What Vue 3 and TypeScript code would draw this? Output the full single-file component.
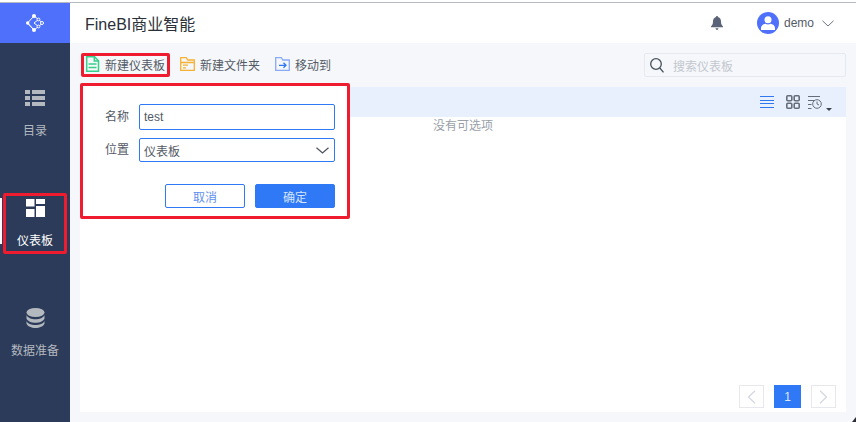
<script setup lang="ts">
const navItems = [
  { key: 'list', label: '目录' },
  { key: 'dash', label: '仪表板' },
  { key: 'db', label: '数据准备' },
]
</script>

<template>
  <div class="shot">
    <aside class="side">
      <div class="logo">
        <svg width="18" height="18" viewBox="0 0 18 18" fill="none" stroke="#fff" stroke-width="1">
          <path d="M8 2 1.500 9 8 16 12.500 12.500 16.500 9 12.500 5.500 8 2M8 9 12.500 5.500M8 9 12.500 12.500M1.500 9 8 16" />
          <g fill="#fff" stroke="none">
            <circle cx="8" cy="2" r="2" />
            <circle cx="1.700" cy="9" r="1.700" />
            <circle cx="8" cy="16" r="2" />
          </g>
          <g fill="#4f70fb" stroke="#fff" stroke-width="1">
            <circle cx="16" cy="9" r="1.500" />
            <circle cx="12.500" cy="5.500" r="1.400" />
            <circle cx="12.500" cy="12.500" r="1.400" />
          </g>
        </svg>
      </div>
      <nav class="nav">
        <div v-for="item in navItems" :key="item.key" class="nav-item" :class="{ active: item.key === 'dash' }">
          <span class="nav-icon">
            <svg v-if="item.key === 'list'" width="20" height="16" viewBox="0 0 20 16" fill="#b4b8bf">
              <rect x="0" y="0" width="5" height="4" /><rect x="7" y="0" width="13" height="4" />
              <rect x="0" y="6" width="5" height="4" /><rect x="7" y="6" width="13" height="4" />
              <rect x="0" y="12" width="5" height="4" /><rect x="7" y="12" width="13" height="4" />
            </svg>
            <svg v-else-if="item.key === 'dash'" width="19" height="18" viewBox="0 0 19 18" fill="#fff">
              <rect x="0" y="0" width="8.500" height="7.500" /><rect x="0" y="10" width="8.500" height="8" />
              <rect x="10" y="0" width="9" height="5" /><rect x="10" y="7" width="9" height="11" />
            </svg>
            <svg v-else width="19" height="20" viewBox="0 0 19 20" fill="#b4b8bf">
              <ellipse cx="9.500" cy="4.500" rx="9" ry="4.500" />
              <path d="M.5 7c1 2.800 5 4.300 9 4.300S17.500 9.800 18.500 7v3.500c-1 2.800-5 4.300-9 4.300s-8-1.500-9-4.300z" />
              <path d="M.5 13c1 2.800 5 4 9 4s8-1.200 9-4v2.500c-1 2.800-5 4.500-9 4.500s-8-1.700-9-4.500z" />
            </svg>
          </span>
          <span class="nav-label">{{ item.label }}</span>
        </div>
      </nav>
    </aside>

    <main class="main">
      <header class="head">
        <h1 class="title">FineBI商业智能</h1>
        <svg class="bell" width="12" height="14" viewBox="0 0 12 14" fill="#5a6478">
          <path d="M6 0c.7 0 1 .5 1 1 2.200.5 3 2.500 3 4.500 0 2.500.8 3.500 2 5v.8H0v-.8c1.200-1.500 2-2.500 2-5C2 3.500 2.800 1.500 5 1c0-.5.300-1 1-1z" />
          <path d="M4.500 12.300h3C7.300 13.500 6.700 14 6 14s-1.300-.5-1.500-1.700z" />
        </svg>
        <span class="avatar">
          <svg width="14" height="14" viewBox="0 0 14 14" fill="#fff">
            <circle cx="7" cy="3.700" r="3.500" />
            <path d="M0 14v-2c0-2.500 2.500-4 4.500-4.300 1.500 1 3.500 1 5 0C11.500 8 14 9.500 14 12v2z" />
          </svg>
        </span>
        <span class="user">demo</span>
        <svg class="user-caret" width="12" height="7" viewBox="0 0 12 7" fill="none" stroke="#6c7480" stroke-width="1">
          <path d="M.5.800 6 6l5.500-5.200" />
        </svg>
      </header>

      <section class="content">
        <div class="toolbar">
          <div class="tool outlined">
            <svg width="15" height="16" viewBox="0 0 15 16" fill="none" stroke="#35d08a" stroke-width="1.500">
              <path d="M1.700.8h7.800l4 4v10.400H1.700z" />
              <path d="M9.300.8v4.200h4.200M3.500 8h8M3.500 11.500h8" />
            </svg>
            <span>新建仪表板</span>
          </div>
          <div class="tool">
            <svg width="15" height="14" viewBox="0 0 15 14" fill="none" stroke="#f8b133" stroke-width="1.300">
              <path d="M.7 13.300V.7h5.600l1.500 2.300h6.500v10.300z" />
              <path d="M.7 5.500h13.600M3 8.200h5M3 10.800h3" />
            </svg>
            <span>新建文件夹</span>
          </div>
          <div class="tool">
            <svg width="15" height="14" viewBox="0 0 15 14" fill="none" stroke="#8aa9f7" stroke-width="1.300">
              <path d="M.7 13.300V.7h5.600l1.500 2.300h6.500v10.300z" />
              <path d="M4 8.300h7M8.500 5.800 11 8.300l-2.500 2.500" stroke="#2f78f0" />
            </svg>
            <span>移动到</span>
          </div>
          <div class="search">
            <svg width="14" height="15" viewBox="0 0 14 15" fill="none" stroke="#46505e" stroke-width="1.300">
              <circle cx="6" cy="6" r="5.300" /><path d="m9.800 10 3.700 4.300" />
            </svg>
            <span>搜索仪表板</span>
          </div>
        </div>

        <div class="panel">
          <div class="panel-bar">
            <svg width="14" height="12" viewBox="0 0 14 12" fill="none" stroke="#2f78f0" stroke-width="1">
              <path d="M0 .5h14M0 4.500h14M0 7.500h14M0 11.500h14" />
            </svg>
            <svg class="grid-icon" width="14" height="14" viewBox="0 0 14 14" fill="none" stroke="#666d7a" stroke-width="1.600">
              <rect x=".8" y=".8" width="5" height="5" rx="1" /><rect x="8.200" y=".8" width="5" height="5" rx="1" />
              <rect x=".8" y="8.200" width="5" height="5" rx="1" /><rect x="8.200" y="8.200" width="5" height="5" rx="1" />
            </svg>
            <svg class="recent-icon" width="24" height="17" viewBox="0 0 24 17" fill="none" stroke="#666d7a" stroke-width="1">
              <path d="M0 1.500h12M0 5.500h6M0 9.500h3.500M0 13.500h3.500" />
              <circle cx="9" cy="9" r="4.300" /><path d="M9 6.500V9l2 1" />
              <path d="M18 13h6l-3 3z" fill="#3c4350" stroke="none" />
            </svg>
          </div>
          <p class="empty">没有可选项</p>
          <div class="pager">
            <button class="page-arrow" type="button" aria-label="上一页">
              <svg width="9" height="14" viewBox="0 0 9 14" fill="none" stroke="#d5d8e2" stroke-width="1.300"><path d="M8 .7 1.500 7 8 13.300" /></svg>
            </button>
            <span class="page-num">1</span>
            <button class="page-arrow" type="button" aria-label="下一页">
              <svg width="9" height="14" viewBox="0 0 9 14" fill="none" stroke="#d5d8e2" stroke-width="1.300"><path d="M1 .7 7.500 7 1 13.300" /></svg>
            </button>
          </div>
        </div>

        <form class="popover" @submit.prevent>
          <div class="field">
            <label>名称</label>
            <div class="input tall">test</div>
          </div>
          <div class="field">
            <label>位置</label>
            <div class="input select">
              <span>仪表板</span>
              <svg width="13" height="7" viewBox="0 0 13 7" fill="none" stroke="#4b5360" stroke-width="1.200"><path d="M.5.700 6.500 6l6-5.300" /></svg>
            </div>
          </div>
          <div class="actions">
            <button class="btn ghost" type="button">取消</button>
            <button class="btn primary" type="button">确定</button>
          </div>
        </form>
      </section>
    </main>
    <span class="corner"></span>
  </div>
</template>

<style>
html, body { margin: 0; padding: 0; background: #f5f7fa; }
</style>

<style scoped>
.shot {
  position: relative;
  width: 856px;
  height: 422px;
  box-sizing: border-box;
  padding-top: 2px;
  background: #fff;
  display: flex;
  overflow: hidden;
  font-family: "Liberation Sans", "Noto Sans CJK SC", sans-serif;
  font-size: 12px;
  color: #535a66;
}
.shot::before {
  content: "";
  position: absolute;
  left: 0; right: 0; top: 2px;
  height: 1px;
  background: #b7b9c0;
}
.corner {
  position: absolute;
  right: 0; bottom: 0;
  width: 4px; height: 5px;
  background: #2a2d33;
  clip-path: polygon(100% 0, 100% 100%, 0 100%);
}
.side { width: 70px; flex: none; background: #2b3b59; display: flex; flex-direction: column; padding-top: 1px; }
.logo { height: 40px; background: #4f70fb; display: flex; align-items: center; justify-content: center; }
.nav { display: flex; flex-direction: column; padding-top: 46px; gap: 50px; }
.nav-item { position: relative; height: 60px; display: flex; flex-direction: column; align-items: center; color: #b4b8bf; gap: 16px; }
.nav-icon { height: 18px; display: flex; align-items: center; }
.nav-item.active { color: #fff; }
.nav-label { line-height: 16px; }
.nav-item.active::before {
  content: "";
  position: absolute;
  left: 0; top: -1px;
  width: 2px; height: 46px;
  background: #fff;
}
.nav-item.active::after {
  content: "";
  position: absolute;
  left: 3px; top: -6px;
  width: 64px; height: 61px;
  box-sizing: border-box;
  border: 3px solid #ee1c2e;
  border-radius: 2px;
}
.main { flex: 1; min-width: 0; display: flex; flex-direction: column; padding-top: 1px; background: #f5f7fa; }
.head { height: 40px; flex: none; background: #fff; display: flex; align-items: center; padding: 0 22px 0 15px; }
.title { margin: 0; font-size: 16px; font-weight: 400; color: #2b3038; flex: 1; }
.bell { margin-right: 34px; }
.avatar { width: 22px; height: 22px; border-radius: 50%; background: #4f70fb; display: flex; align-items: center; justify-content: center; }
.user { margin: 0 8px 0 5px; font-size: 12px; color: #545b66; }
.content { position: relative; flex: 1; display: flex; flex-direction: column; padding: 0 10px 10px; min-height: 0; }
.toolbar { height: 44px; box-sizing: border-box; padding-bottom: 2px; display: flex; align-items: center; flex: none; }
.tool { position: relative; height: 18px; display: flex; align-items: center; gap: 5px; margin-right: 10px; padding-left: 5px; }
.tool.outlined::after {
  content: "";
  position: absolute;
  left: 1px; top: -2px; right: -5px; bottom: -4px;
  border: 3px solid #ee1c2e;
  border-radius: 2px;
}
.search {
  margin-left: auto;
  margin-top: 2px;
  width: 202px; height: 24px;
  box-sizing: border-box;
  border: 1px solid #e6e9ef;
  border-radius: 2px;
  display: flex; align-items: center;
  padding-left: 5px; gap: 9px;
  color: #c3c7cf;
}
.panel { position: relative; flex: 1; background: #fff; display: flex; flex-direction: column; min-height: 0; }
.panel-bar { height: 30px; flex: none; background: #e8f0fd; display: flex; align-items: center; justify-content: flex-end; padding-right: 14px; }
.grid-icon { margin-left: 12px; }
.recent-icon { margin-left: 8px; margin-top: 3px; }
.empty { margin: 1px 0 0; text-align: center; color: #9a9fa8; line-height: 16px; }
.pager { margin-top: auto; display: flex; justify-content: flex-end; align-items: center; padding: 0 10px 4px 0; }
.page-arrow {
  width: 25px; height: 23px; box-sizing: border-box; padding: 0;
  border: 1px solid #e6e8ee; background: #fff;
  display: flex; align-items: center; justify-content: center;
}
.page-num { width: 27px; height: 23px; margin: 0 10px; background: #2f78f6; color: #dfe9fd; display: flex; align-items: center; justify-content: center; }
.popover {
  position: absolute;
  left: 10px; top: 40px;
  width: 270px; height: 136px;
  box-sizing: border-box;
  background: #fff;
  border: 3px solid #ee1c2e;
  border-radius: 2px;
  padding: 18px 12px 0 0;
  display: flex; flex-direction: column;
}
.field { display: flex; align-items: center; margin-bottom: 8px; }
.field label { width: 46px; margin-right: 10px; padding-bottom: 3px; text-align: right; color: #535a66; }
.input {
  flex: 1; height: 25px; box-sizing: border-box;
  border: 1px solid #2f78f6; border-radius: 2px;
  padding: 0 4px; display: flex; align-items: center; color: #535a66;
}
.input.tall { height: 26px; }
.input.select { height: 24px; justify-content: space-between; padding-right: 5px; }
.actions { margin-top: 14px; display: flex; justify-content: flex-end; gap: 10px; }
.btn { width: 80px; height: 24px; box-sizing: border-box; border-radius: 2px; font: inherit; padding: 0; }
.btn.ghost { background: #fff; border: 1px solid #2f78f6; color: #5f90ee; }
.btn.primary { background: #2f78f6; border: 1px solid #2f78f6; color: #d6e4fd; }
</style>
